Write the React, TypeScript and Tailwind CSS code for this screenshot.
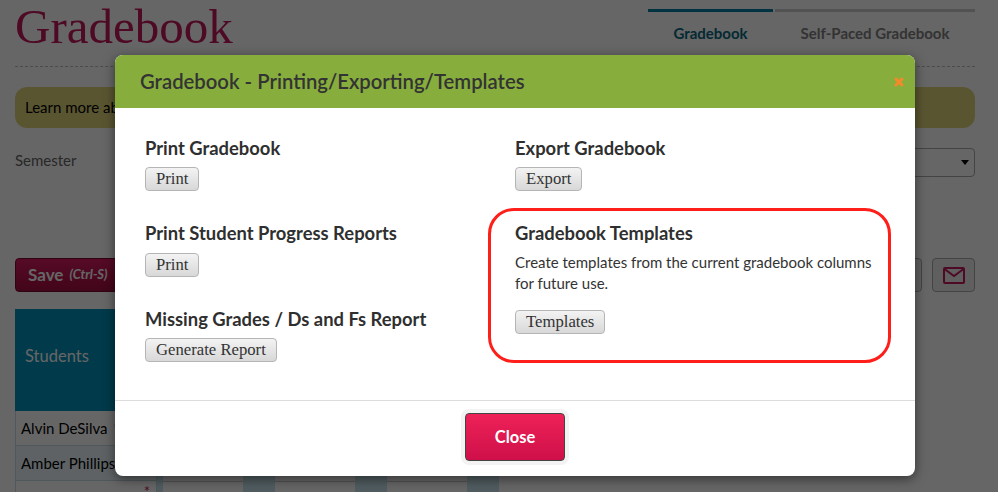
import React from "react";
import { X } from "lucide-react";

const sans = "font-['Lato','Open_Sans',sans-serif]";

function GreyButton({ label }: { label: string }) {
  return (
    <button className="h-6 px-[10px] rounded-[4px] border border-[#b5b5b5] bg-gradient-to-b from-[#f3f3f3] to-[#d8d8d8] font-['Liberation_Serif',serif] text-[16.7px] leading-none text-[#333]">
      {label}
    </button>
  );
}

function Heading({ children }: { children: React.ReactNode }) {
  return <h3 className="text-[18.4px] leading-5 font-bold text-[#2f2f2f]">{children}</h3>;
}

function Section({ title, label }: { title: string; label: string }) {
  return (
    <div>
      <Heading>{title}</Heading>
      <div className="mt-[9px] flex">
        <GreyButton label={label} />
      </div>
    </div>
  );
}

function GradeColumns() {
  return (
    <div className="ml-0 flex flex-1 items-stretch">
      <div className="w-[6px] bg-[#c8e6f0]" />
      <div className="mt-[70px] w-20 border-t border-[#ccc] bg-white" />
      <div className="w-8 bg-[#c8e6f0]" />
      <div className="mt-[70px] w-20 border-t border-[#ccc] bg-white" />
      <div className="w-8 bg-[#c8e6f0]" />
      <div className="mt-[70px] w-20 border-t border-[#ccc] bg-white" />
      <div className="w-8 bg-[#c8e6f0]" />
    </div>
  );
}

function Page() {
  return (
    <div className={`h-[492px] overflow-hidden bg-white pl-[15px] pr-[23px] ${sans}`}>
      <div className="flex h-[67px] items-start justify-between border-b border-dashed border-[#bbb]">
        <h1 className="mt-[2px] font-['Liberation_Serif',serif] text-[49px] leading-[50px] text-[#c2185b]">Gradebook</h1>
        <div className="mt-[9px] flex gap-[2px]">
          <div className="w-[125px] border-t-[3px] border-[#007da3] pt-[10px] text-center text-[15px] font-bold text-[#0a6a80]">Gradebook</div>
          <div className="w-[200px] border-t-[3px] border-[#ccc] pt-[10px] text-center text-[15px] font-bold text-[#7f7f7f]">Self-Paced Gradebook</div>
        </div>
      </div>
      <div className="mt-5 h-[41px] rounded-[12px] bg-[#e0d47a] px-[10px] text-[15px] leading-[41px] text-black">Learn more about</div>
      <div className="mt-5 flex items-start justify-between">
        <span className="mt-[1px] text-[15px] text-[#666]">Semester</span>
        <div className="flex h-[29px] w-[200px] items-center justify-end rounded-[4px] border border-[#aaa] bg-white pr-[5px]">
          <svg viewBox="0 0 8 5" className="h-[5px] w-2 fill-black">
            <path d="M0 0h8L4 5z" />
          </svg>
        </div>
      </div>
      <div className="mt-[81px] flex items-center justify-between">
        <div className="flex h-[34px] w-[130px] items-center rounded-[4px] border border-[#7a0a30] bg-gradient-to-b from-[#d81b60] to-[#a50d40] pl-3 text-[17px] font-bold text-white">
          Save <i className="ml-[6px] text-[13px]">(Ctrl-S)</i>
        </div>
        <div className="flex gap-[10px]">
          <div className="h-[34px] w-[43px] rounded-[4px] border border-[#aaa] bg-[#eee]" />
          <div className="flex h-[34px] w-[43px] items-center justify-center rounded-[4px] border border-[#aaa] bg-[#eee]">
            <svg viewBox="0 0 22 17" className="h-[17px] w-[22px] fill-none stroke-[#c2185b] stroke-2">
              <rect x="1" y="1" width="20" height="15" rx="1" />
              <path d="M1.5 2l9.5 7 9.5-7" />
            </svg>
          </div>
        </div>
      </div>
      <div className="mt-[17px] flex h-[102px] w-[142px] items-center bg-[#0091bb] pb-[7px] pl-[10px] text-[16.5px] text-white">Students</div>
      <div className="flex h-[81px] w-[484px]">
        <div className="w-[142px]">
          <div className="flex h-[35px] items-center border-x border-b border-[#c5dbe4] bg-white pl-[5px] text-[15px] text-black">
            Alvin DeSilva <span className="ml-[6px] text-[#c2185b]">*</span>
          </div>
          <div className="flex h-[35px] items-center border-x border-b border-[#c5dbe4] bg-[#eaf6fa] pl-[5px] text-[15px] text-black">Amber Phillips</div>
          <div className="h-[11px] border-x border-[#c5dbe4] bg-white pr-[6px] text-right text-[15px] leading-[20px] text-[#c2185b]">*</div>
        </div>
        <GradeColumns />
      </div>
    </div>
  );
}

export default function App() {
  return (
    <div className="relative h-[492px] w-[998px] overflow-hidden">
      <Page />
      <div className="absolute inset-0 bg-black/60" />
      <div className={`absolute left-[115px] top-[55px] flex h-[421px] w-[800px] flex-col overflow-hidden rounded-[8px] bg-white shadow-[0_3px_12px_rgba(0,0,0,0.5)] ${sans}`}>
        <div className="flex h-[53px] items-center justify-between bg-[#87ad3d] pl-[25px] pr-[10px]">
          <h2 className="text-[20.3px] font-semibold text-[#333]">Gradebook - Printing/Exporting/Templates</h2>
          <X className="h-3 w-3 text-[#f58a2a]" strokeWidth={6} />
        </div>
        <div className="relative grid flex-1 grid-cols-2 px-[30px] pt-[30px]">
          <div className="flex flex-col gap-8">
            <Section title="Print Gradebook" label="Print" />
            <div>
              <Heading>Print Student Progress Reports</Heading>
              <div className="mt-[10px] flex">
                <GreyButton label="Print" />
              </div>
            </div>
            <Section title="Missing Grades / Ds and Fs Report" label="Generate Report" />
          </div>
          <div>
            <Section title="Export Gradebook" label="Export" />
            <div className="mt-8">
              <Heading>Gradebook Templates</Heading>
              <p className="mt-[9px] w-[365px] text-[15px] leading-[21px] text-[#333]">
                Create templates from the current gradebook columns for future use.
              </p>
              <div className="mt-4 flex">
                <GreyButton label="Templates" />
              </div>
            </div>
          </div>
          <div className="absolute left-[373px] top-[100px] h-[155px] w-[403px] rounded-[26px] border-[3px] border-[#ff1f1a]" />
        </div>
        <div className="flex h-[76px] items-start justify-center border-t border-[#ddd] pt-3">
          <button className="h-12 w-[100px] rounded-[4px] border border-[#444] bg-gradient-to-b from-[#ee2157] to-[#cf0f4a] pt-[1px] text-[16.5px] font-bold text-white shadow-[0_0_0_4px_#f3f3f3]">
            Close
          </button>
        </div>
      </div>
    </div>
  );
}
